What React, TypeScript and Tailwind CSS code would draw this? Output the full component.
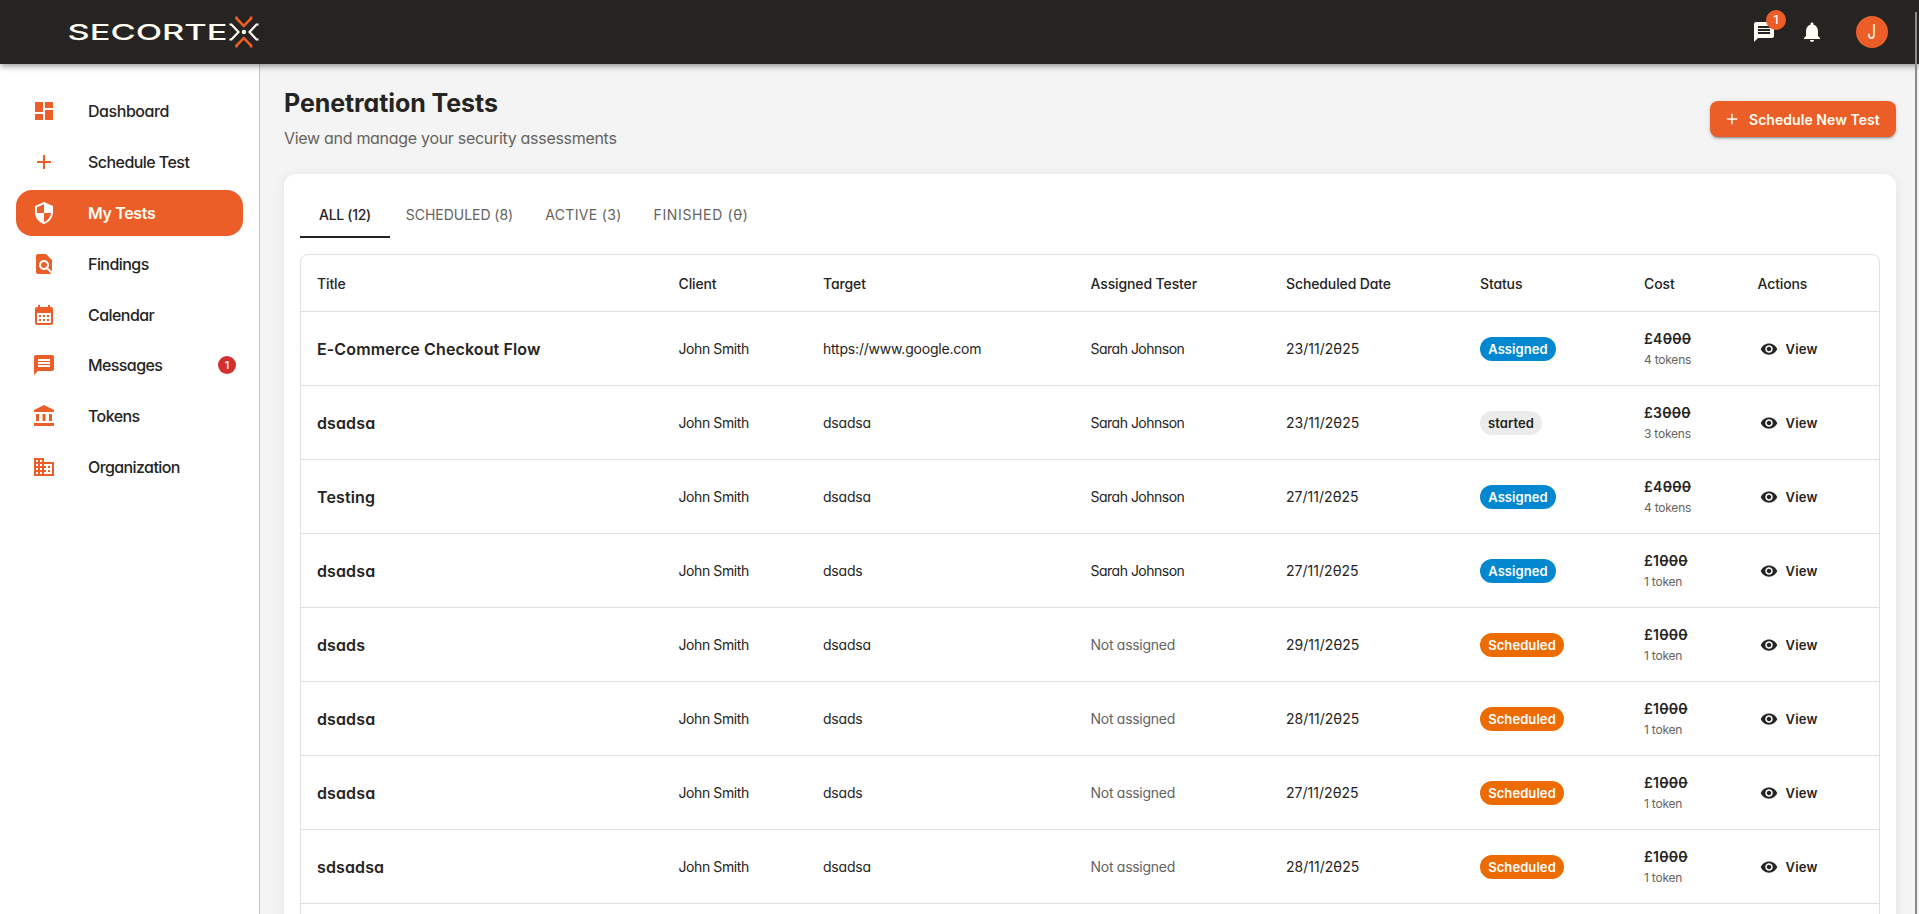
import React from 'react';
import {
  MdAccountBalance,
  MdAdd,
  MdBusiness,
  MdCalendarMonth,
  MdDashboard,
  MdFindInPage,
  MdMessage,
  MdNotifications,
  MdSecurity,
  MdVisibility,
} from 'react-icons/md';
import type { IconType } from 'react-icons';

interface NavItem {
  label: string;
  icon: IconType;
  tracking: string;
  badge?: number;
}

interface PenTest {
  title: string;
  target: string;
  tester?: string;
  date: string;
  status: 'Assigned' | 'started' | 'Scheduled';
  tokens: number;
}

const navItems: NavItem[] = [
  { label: 'Dashboard', icon: MdDashboard, tracking: 'tracking-[-0.45px]' },
  { label: 'Schedule Test', icon: MdAdd, tracking: 'tracking-[-0.55px]' },
  { label: 'My Tests', icon: MdSecurity, tracking: 'tracking-[-0.35px]' },
  { label: 'Findings', icon: MdFindInPage, tracking: 'tracking-[-0.55px]' },
  { label: 'Calendar', icon: MdCalendarMonth, tracking: 'tracking-[-0.55px]' },
  { label: 'Messages', icon: MdMessage, tracking: 'tracking-[-0.6px]', badge: 1 },
  { label: 'Tokens', icon: MdAccountBalance, tracking: 'tracking-[-0.6px]' },
  { label: 'Organization', icon: MdBusiness, tracking: 'tracking-[-0.6px]' },
];

const tabs = [
  { label: 'ALL', count: 12, className: 'w-[90px] tracking-[-0.3px]' },
  { label: 'SCHEDULED', count: 8, className: 'w-[139px] tracking-[-0.04px]' },
  { label: 'ACTIVE', count: 3, className: 'w-[109px] tracking-[0.35px]' },
  { label: 'FINISHED', count: 0, className: 'w-[126px] tracking-[0.65px]' },
];

const tests: PenTest[] = [
  { title: 'E-Commerce Checkout Flow', target: 'https://www.google.com', tester: 'Sarah Johnson', date: '23/11/2025', status: 'Assigned', tokens: 4 },
  { title: 'dsadsa', target: 'dsadsa', tester: 'Sarah Johnson', date: '23/11/2025', status: 'started', tokens: 3 },
  { title: 'Testing', target: 'dsadsa', tester: 'Sarah Johnson', date: '27/11/2025', status: 'Assigned', tokens: 4 },
  { title: 'dsadsa', target: 'dsads', tester: 'Sarah Johnson', date: '27/11/2025', status: 'Assigned', tokens: 1 },
  { title: 'dsads', target: 'dsadsa', date: '29/11/2025', status: 'Scheduled', tokens: 1 },
  { title: 'dsadsa', target: 'dsads', date: '28/11/2025', status: 'Scheduled', tokens: 1 },
  { title: 'dsadsa', target: 'dsads', date: '27/11/2025', status: 'Scheduled', tokens: 1 },
  { title: 'sdsadsa', target: 'dsadsa', date: '28/11/2025', status: 'Scheduled', tokens: 1 },
];

const statusStyles = {
  Assigned: 'w-[76px] bg-[#0288d1] text-white',
  started: 'w-[62px] bg-[#ebebeb] text-[#252422]',
  Scheduled: 'w-[84px] bg-[#ed6c02] text-white',
};

// Zeros carry a horizontal bar so they can't be mistaken for an O
const BarredZeros: React.FC<{ text: string; bold?: boolean }> = ({ text, bold }) => (
  <>
    {text.split(/(0)/).map((part, i) =>
      part === '0' ? (
        <span
          key={i}
          className={`bg-[linear-gradient(currentColor,currentColor)] bg-center bg-no-repeat ${
            bold ? 'bg-[length:85%_1.5px]' : 'bg-[length:80%_1px]'
          }`}
        >
          0
        </span>
      ) : (
        part
      )
    )}
  </>
);

const Logo: React.FC = () => (
  <svg className="w-[196px] h-8" viewBox="66 16 196 32" fill="none">
    <text x="67.500" y="40" fontSize="22" fontWeight="500" fill="#fffcf2" textLength="160" lengthAdjust="spacingAndGlyphs">
      SECORTE
    </text>
    <path d="M229.500 24.500h2l7 7.500-7 7.500h-2M258.500 24.500h-2l-7 7.500 7 7.500h2" stroke="#fffcf2" strokeWidth="2.200" />
    <path d="M236.500 16.500v2l7.300 7.500 7.300-7.500v-2M236.500 47.500v-2l7.300-7.500 7.300 7.500v2" stroke="#eb5e28" strokeWidth="2.600" />
    <circle cx="243.900" cy="32" r="2.200" fill="#fffcf2" />
  </svg>
);

const Header: React.FC = () => (
  <header className="relative z-10 h-16 shrink-0 flex items-center justify-between bg-[#252422] pl-[66px] pr-[31px] shadow-[0_2px_4px_-1px_rgba(0,0,0,0.2),0_4px_5px_0_rgba(0,0,0,0.14),0_1px_10px_0_rgba(0,0,0,0.12)]">
    <Logo />
    <div className="flex items-center text-[#fffcf2]">
      <button className="relative mr-6">
        <MdMessage className="w-6 h-6" />
        <span className="absolute left-[14px] -top-[10px] w-5 h-5 rounded-full bg-[#eb5e28] flex items-center justify-center text-xs font-medium">
          1
        </span>
      </button>
      <button className="mr-8">
        <MdNotifications className="w-6 h-6" />
      </button>
      <div className="w-8 h-8 rounded-full bg-[#eb5e28] flex items-center justify-center text-xl leading-none">
        <span className="scale-x-75">J</span>
      </div>
    </div>
  </header>
);

const Sidebar: React.FC = () => (
  <aside className="w-[260px] shrink-0 bg-white border-r border-[#ccc5b9] pt-[24.4px] px-4">
    <nav>
      {navItems.map(({ label, icon: Icon, tracking, badge }) => {
        const active = label === 'My Tests';
        return (
          <a
            key={label}
            className={`relative flex items-center h-[46px] mb-[4.8px] pl-4 rounded-2xl ${
              active ? 'bg-[#eb5e28] text-[#fffcf2] font-semibold' : 'text-[#252422] font-medium'
            }`}
          >
            <Icon className={`w-6 h-6 mr-8 ${active ? 'text-white' : 'text-[#eb5e28]'}`} />
            <span className={`text-base ${tracking}`}>{label}</span>
            {badge && (
              <span className="absolute right-[7px] top-[14px] w-[18px] h-[18px] rounded-full bg-[#d32f2f] text-white text-[11px] font-medium flex items-center justify-center">
                {badge}
              </span>
            )}
          </a>
        );
      })}
    </nav>
  </aside>
);

const TestRow: React.FC<{ test: PenTest }> = ({ test }) => (
  <tr className="h-[74px] border-b border-[#e0e0e0] text-sm">
    <td className="px-4 pt-0.5 text-base font-semibold tracking-[0.12px]">{test.title}</td>
    <td className="px-4 pt-0.5 tracking-[-0.4px]">John Smith</td>
    <td className="px-4 pt-0.5 tracking-[-0.2px]">{test.target}</td>
    <td className={`px-4 pt-0.5 ${test.tester ? 'tracking-[-0.5px]' : 'text-[#66635e] tracking-[-0.28px]'}`}>
      {test.tester ?? 'Not assigned'}
    </td>
    <td className="px-4 pt-0.5 tracking-[0.02px]">
      <BarredZeros text={test.date} />
    </td>
    <td className="px-4 pt-0.5">
      <span className={`flex items-center justify-center h-6 rounded-full text-[13px] font-semibold tracking-[0.08px] ${statusStyles[test.status]}`}>
        {test.status}
      </span>
    </td>
    <td className="px-4 pt-0.5">
      <div className="leading-[22px] font-semibold tracking-[0.25px]">
        <BarredZeros text={`£${test.tokens}000`} bold />
      </div>
      <div className="text-xs leading-5 text-[#66635e] tracking-[-0.22px]">
        {test.tokens} {test.tokens === 1 ? 'token' : 'tokens'}
      </div>
    </td>
    <td className="px-4 pt-0.5">
      <button className="flex items-center gap-2 pl-0.5 text-[13px] font-semibold tracking-[0.25px]">
        <MdVisibility className="w-[18px] h-[18px]" />
        View
      </button>
    </td>
  </tr>
);

const App: React.FC = () => {
  return (
    <div className="relative h-screen flex flex-col overflow-hidden bg-[#f4f4f4] text-[#252422] font-['Inter','Liberation_Sans',sans-serif] [font-feature-settings:'cv11']">
      <Header />
      <div className="flex flex-1 min-h-0">
        <Sidebar />
        <main className="flex-1 min-w-0 pl-6 pr-[23px] pt-6">
          <div className="flex items-center justify-between h-[62px]">
            <div>
              <h1 className="text-[25px] leading-8 -mt-px font-bold tracking-[-0.08px]">Penetration Tests</h1>
              <p className="mt-[7px] text-base leading-6 text-[#66635e] tracking-[-0.3px]">
                View and manage your security assessments
              </p>
            </div>
            <button className="flex items-center w-[186px] h-9 pl-[13px] rounded-lg bg-[#eb5e28] text-[#fffcf2] text-sm font-semibold tracking-[0.05px] shadow-[0_3px_1px_-2px_rgba(0,0,0,0.2),0_2px_2px_0_rgba(0,0,0,0.14),0_1px_5px_0_rgba(0,0,0,0.12)]">
              <MdAdd className="w-[18px] h-[18px] mr-2" />
              <span className="pt-0.5">Schedule New Test</span>
            </button>
          </div>

          <section className="mt-6 h-[1100px] rounded-xl bg-white p-4 shadow-[0_2px_12px_rgba(0,0,0,0.08)]">
            <div className="flex h-12">
              {tabs.map((tab, i) => (
                <button
                  key={tab.label}
                  className={`flex items-center justify-center text-sm pt-1 border-b-2 whitespace-nowrap ${tab.className} ${
                    i === 0 ? 'font-medium border-[#252422]' : 'text-[#66635e] border-transparent'
                  }`}
                >
                  <span>
                    {tab.label} (<BarredZeros text={String(tab.count)} />)
                  </span>
                </button>
              ))}
            </div>

            <div className="mt-4 rounded-lg border border-[#e0e0e0] h-[1000px]">
              <table className="w-full table-fixed border-collapse">
                <colgroup>
                  <col className="w-[361.5px]" />
                  <col className="w-[144.5px]" />
                  <col className="w-[267.5px]" />
                  <col className="w-[195.5px]" />
                  <col className="w-[194px]" />
                  <col className="w-[164px]" />
                  <col className="w-[113.5px]" />
                  <col />
                </colgroup>
                <thead>
                  <tr className="h-14 border-b border-[#e0e0e0] text-left text-sm tracking-[-0.12px]">
                    {['Title', 'Client', 'Target', 'Assigned Tester', 'Scheduled Date', 'Status', 'Cost', 'Actions'].map((heading) => (
                      <th key={heading} className="px-4 pt-0.5 font-medium">{heading}</th>
                    ))}
                  </tr>
                </thead>
                <tbody>
                  {tests.map((test, i) => (
                    <TestRow key={i} test={test} />
                  ))}
                </tbody>
              </table>
            </div>
          </section>
        </main>
      </div>
      {/* Scrollbar thumb */}
      <div className="absolute z-20 right-0.5 top-3 bottom-0 w-0.5 bg-[#8a8a8a]" />
    </div>
  );
};

export default App;
